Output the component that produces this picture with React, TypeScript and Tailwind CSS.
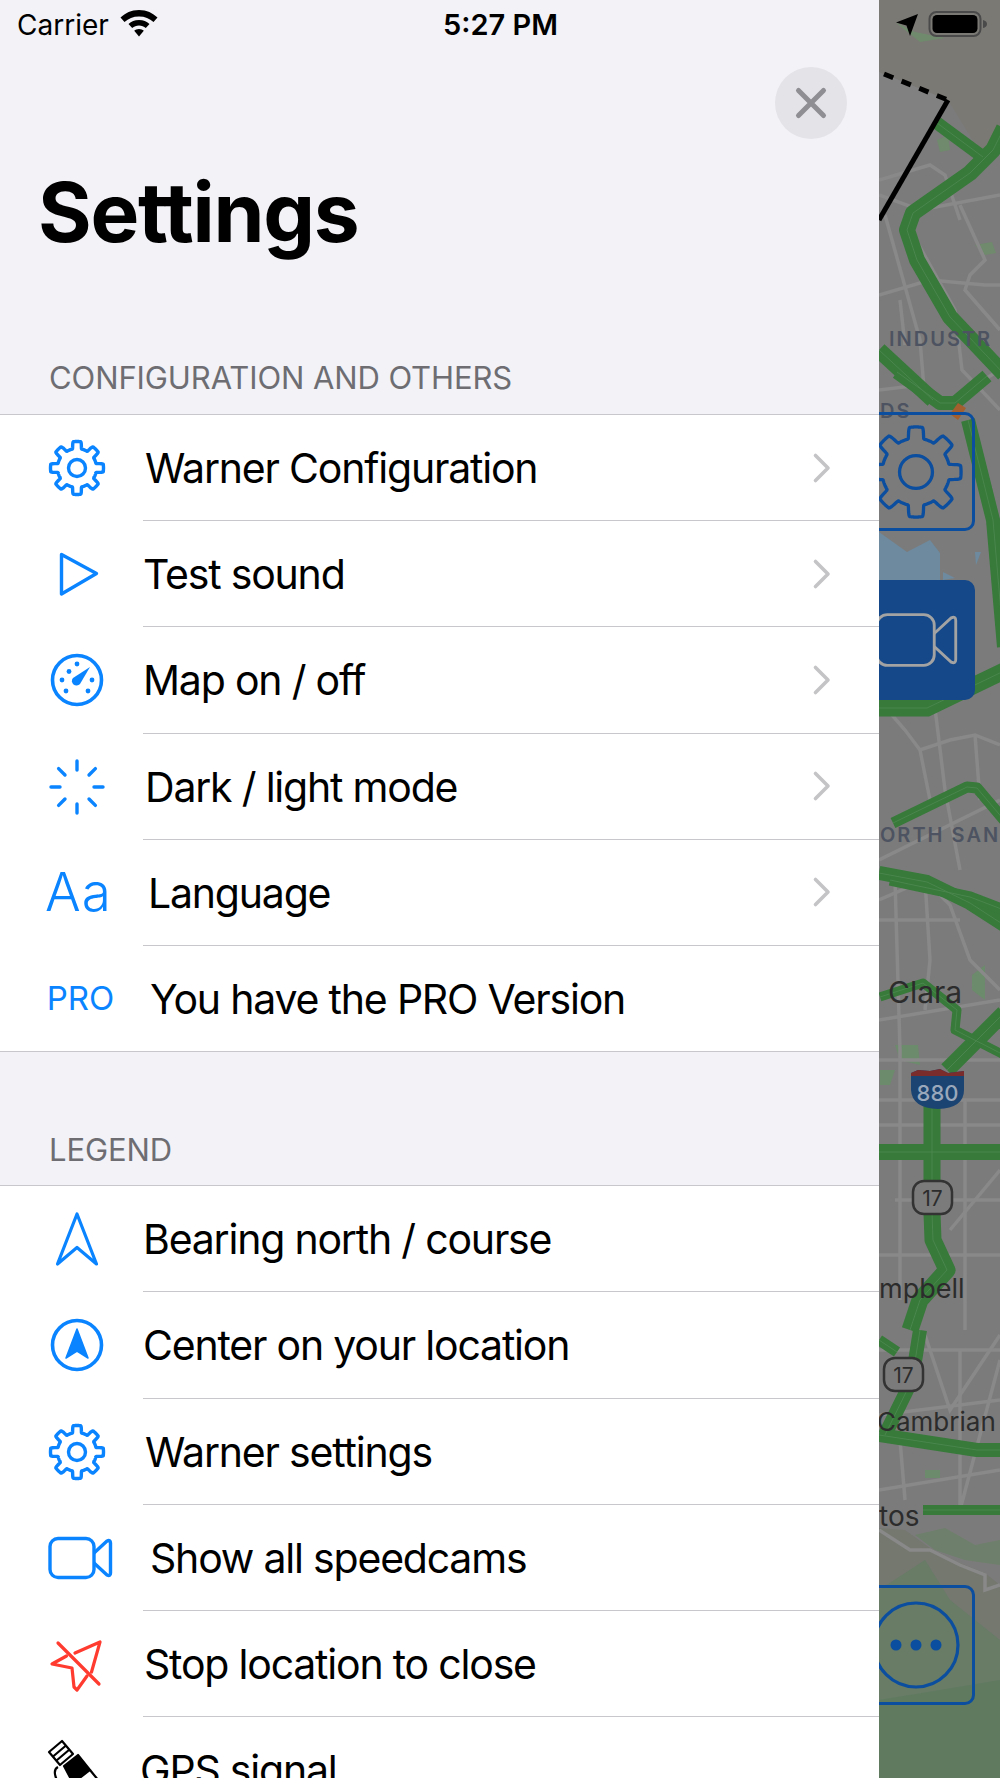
import type { ReactNode } from "react";

// gearshape outline: radius swings between root and outer, 8 soft teeth
function gearPath(cx: number, cy: number, outer: number, root: number) {
  const pts: string[] = [];
  const samples = 360;
  for (let i = 0; i < samples; i++) {
    const t = (i / samples) * Math.PI * 2;
    const c = Math.cos(8 * t);
    const k = Math.min(1, Math.max(0, (c + 0.35) / 0.8));
    const s = k * k * (3 - 2 * k);
    const r = root + (outer - root) * s;
    pts.push(`${(cx + r * Math.sin(t)).toFixed(2)} ${(cy - r * Math.cos(t)).toFixed(2)}`);
  }
  return `M${pts.join("L")}Z`;
}

function GearIcon() {
  return (
    <svg className="shrink-0" width="60" height="60" viewBox="0 0 60 60" fill="none" stroke="#0a84ff" strokeWidth="3.4" strokeLinejoin="round">
      <path d={gearPath(30, 30, 26.5, 19.5)} />
      <circle cx="30" cy="30" r="8.5" />
    </svg>
  );
}

function PlayIcon() {
  return (
    <svg className="shrink-0" width="60" height="60" viewBox="0 0 60 60" fill="none" stroke="#0a84ff" strokeWidth="3.4" strokeLinejoin="round">
      <path d="M14.500 10.500 L49.500 29.500 L14.500 50 Z" />
    </svg>
  );
}

function GaugeIcon() {
  return (
    <svg className="shrink-0" width="60" height="60" viewBox="0 0 60 60" fill="none">
      <circle cx="30" cy="30" r="24.500" stroke="#0a84ff" strokeWidth="3.6" />
      {[[22, 21.5], [30, 14], [15, 30], [45, 30], [19, 41], [41, 41]].map(([x, y]) => (
        <circle key={`${x}-${y}`} cx={x} cy={y} r="2.400" fill="#0a84ff" />
      ))}
      <path d="M43 17 L33 34 A4.400 4.400 0 1 1 26 28 Z" fill="#0a84ff" />
    </svg>
  );
}

function SpinnerIcon() {
  const spokes = [0, 45, 90, 135, 180, 225, 270, 315];
  return (
    <svg className="shrink-0" width="60" height="60" viewBox="0 0 60 60" fill="none" stroke="#0a84ff" strokeWidth="3.4" strokeLinecap="round">
      {spokes.map((deg) => (
        <line key={deg} x1="30" y1="4" x2="30" y2="13" transform={`rotate(${deg} 30 30)`} />
      ))}
    </svg>
  );
}

function BearingIcon() {
  return (
    <svg className="shrink-0" width="60" height="60" viewBox="0 0 60 60" fill="none" stroke="#0a84ff" strokeWidth="3.2" strokeLinejoin="round">
      <path d="M30 5 L49.500 55 L30 38.500 L10.500 55 Z" />
    </svg>
  );
}

function CenterIcon() {
  return (
    <svg className="shrink-0" width="60" height="60" viewBox="0 0 60 60" fill="none">
      <circle cx="30" cy="30" r="24.500" stroke="#0a84ff" strokeWidth="3.6" />
      <path d="M30 14 L41 43 L30 36 L19 43 Z" fill="#0a84ff" stroke="#0a84ff" strokeWidth="1.5" strokeLinejoin="round" />
    </svg>
  );
}

function CameraIcon({
  color = "#0a84ff",
  width = 66,
  height = 44,
  stroke = 3.4,
  className = "",
}: {
  color?: string;
  width?: number;
  height?: number;
  stroke?: number;
  className?: string;
}) {
  return (
    <svg className={`shrink-0 ${className}`} width={width} height={height} viewBox="0 0 66 44" fill="none" stroke={color} strokeWidth={stroke} strokeLinejoin="round">
      <rect x="3" y="2.500" width="44" height="39" rx="8" />
      <path d="M47 17 L60 5 Q63.500 3.500 63.500 7 V37 Q63.500 40.500 60 39 L47 27" />
    </svg>
  );
}

function StopLocationIcon() {
  return (
    <svg className="shrink-0" width="60" height="60" viewBox="0 0 60 60" fill="none" stroke="#ff3b30" strokeWidth="3.2" strokeLinejoin="round" strokeLinecap="round">
      <path d="M28 19 L53 8 L44.500 38" />
      <path d="M19.500 22 L5 30 L25 34 L27 53 L30 56 L40 42" />
      <line x1="11" y1="9" x2="52" y2="50" />
    </svg>
  );
}

// the bottom of this one falls below the fold in the screenshot
function SatelliteIcon() {
  return (
    <svg className="shrink-0 overflow-visible" width="60" height="60" viewBox="0 0 60 60" fill="none" stroke="#000" strokeWidth="2.2" strokeLinejoin="round">
      <path d="M15 1 L2 12 L13 25 L26 14 Z" />
      <path d="M19 5.500 L6 16.500 M22.500 9.500 L9.500 20.500" />
      <path d="M31 15 L43 30 L26 43 L17 26 Z" fill="#000" />
      <path d="M11 27 C5 30 8 42 18 48 L26 43" />
      <path d="M43 30 L56 46 L40 58 L28 44" />
    </svg>
  );
}

function Chevron() {
  return (
    <svg className="shrink-0" width="20" height="32" viewBox="0 0 20 32" fill="none" stroke="#c4c4c7" strokeWidth="3.6" strokeLinecap="round" strokeLinejoin="round">
      <path d="M3.500 3.500 L16 16 L3.500 28.500" />
    </svg>
  );
}

interface RowProps {
  icon: ReactNode;
  label: string;
  indent: string;
  chevron?: boolean;
  last?: boolean;
}

function Row({ icon, label, indent, chevron, last }: RowProps) {
  return (
    <div className="flex h-[106.2px] bg-white">
      <div className={`relative w-[143px] shrink-0 ${last ? "border-b border-[#c8c8cc]" : ""}`}>
        <div className="absolute left-[47px] top-[23px] flex h-[60px] w-[60px] items-center justify-center">{icon}</div>
      </div>
      <div className={`flex min-w-0 flex-1 items-center justify-between border-b border-[#c8c8cc] pr-[47px] ${indent}`}>
        <span className="pt-[2px] text-[41px] leading-none tracking-[-1.2px] text-black">{label}</span>
        {chevron && <Chevron />}
      </div>
    </div>
  );
}

const GREEN_ROADS: [string, number][] = [
  ["M937 123 L983 157", 13],
  ["M1004 128 L993 150 L970 173 L913 213 L907 230 L917 260 L950 317 L1004 374", 16],
  ["M879 350 L933 400", 16],
  ["M897 372 L940 403 L955 403 L987 376", 14],
  ["M968 420 L993 520 L1004 647", 14],
  ["M879 708 L927 708 L1004 671", 17],
  ["M893 823 L967 787 L977 788 L1004 820", 11],
  ["M879 873 L927 882 L970 903 L1004 925", 14],
  ["M890 880 L970 897 L1004 910", 11],
  ["M1004 1013 L947 1070", 16],
  ["M932 1085 L932 1213 L933 1240 L947 1270 L920 1300 L910 1330", 17],
  ["M879 1152 L1004 1152", 16],
  ["M880 997 L923 983 L957 1010 L955 1030 L1004 1055", 9],
  ["M920 1330 L912 1380 L885 1435", 14],
  ["M879 1340 L897 1352", 11],
  ["M879 1435 L977 1450 L1004 1450", 14],
  ["M923 1510 L1004 1510", 10],
];

const STREETS = [
  "M879 180 L930 165 L945 175 L960 220",
  "M879 195 L920 210 L1000 195",
  "M905 220 L955 310 L962 370 L1000 410",
  "M879 295 L930 280 L985 285 L1000 285",
  "M960 205 L985 260 L970 275 L965 290 L1000 330",
  "M885 215 L920 340 L925 400",
  "M900 300 L905 345",
  "M879 390 L920 385 L935 400",
  "M950 400 L1000 370",
  "M879 700 L905 730 L920 750 L950 740 L975 735 L1000 745",
  "M920 750 L930 800 M975 735 L980 800",
  "M935 708 L945 790 L960 870",
  "M879 860 L1000 800",
  "M879 900 L925 880 L950 905 L970 960 L1000 990",
  "M895 880 L900 1050 L900 1300",
  "M925 880 L930 960 L925 1010",
  "M879 920 L960 920 M879 1020 L1000 1000",
  "M879 1060 L1000 1060 M879 1100 L1000 1100 M879 1125 L1000 1125",
  "M965 1100 L965 1330",
  "M895 1200 L1000 1200 M879 1255 L1000 1255",
  "M1000 1170 L950 1230",
  "M879 1350 L1000 1350 M879 1415 L1000 1400",
  "M925 1335 L950 1410 L1000 1335",
  "M960 1350 L960 1510 M1000 1360 L960 1510",
  "M900 1440 L905 1500",
  "M879 1490 L1000 1470",
  "M879 1530 L910 1550 L930 1550 L960 1565 L985 1575 L985 1590 L1000 1585",
];

function MapBackdrop() {
  return (
    <svg className="h-[1778px] w-[121px]" viewBox="879 0 121 1778" fill="none">
      <rect x="879" y="0" width="121" height="1778" fill="#7b7b7b" />
      {/* hills at the top and the bottom */}
      <path d="M879 0 H1000 V135 L983 157 L948 100 L884 74 L879 72 Z" fill="#7b7974" />
      <path d="M948 100 L884 74 L879 72 V220 Z" fill="#818181" />
      <path d="M895 22 L915 32 L945 38 L920 42 Z M937 140 L948 135 L950 150 L940 152 Z M975 245 L992 242 L996 253 L985 255 Z" fill="#6f8a6c" />
      <path d="M879 1528 L905 1530 L930 1548 L960 1563 L985 1573 L1000 1585 V1778 H879 Z" fill="#74786f" />
      <path d="M915 1535 L945 1528 L975 1545 L1000 1540 V1565 L965 1560 L935 1550 Z" fill="#6e806b" />
      <path d="M879 1590 L925 1560 L950 1600 L1000 1640 V1778 H879 Z" fill="#687c66" />
      <path d="M879 1700 L940 1690 L1000 1680 V1778 H879 Z" fill="#607a60" />
      <path d="M925 1470 H940 V1478 H925 Z M972 975 L985 965 L985 1000 L972 990 Z M895 1045 L918 1045 L920 1065 L900 1060 Z M880 1070 L895 1070 L890 1085 L880 1085 Z" fill="#6c8a6c" />

      <g stroke="#898989" strokeWidth="3.500">
        {STREETS.map((d) => (
          <path key={d} d={d} />
        ))}
      </g>

      {/* water patch behind the camera button */}
      <path d="M879 532 L907 552 L930 540 L940 553 L940 700 L879 700 Z" fill="#6d8a9f" />
      <path d="M975 552 L981 552 L976 565 Z M943 572 L955 578 L943 580 Z" fill="#6d8a9f" />

      <g stroke="#377a3a" strokeLinejoin="round">
        {GREEN_ROADS.map(([d, w]) => (
          <path key={d} d={d} strokeWidth={w} />
        ))}
      </g>
      <g stroke="#4a864d" strokeWidth="1" strokeLinejoin="round">
        {GREEN_ROADS.map(([d]) => (
          <path key={d} d={d} />
        ))}
      </g>
      <path d="M950 414 L958 403 L966 408 L958 420 Z" fill="#a45f2e" />

      {/* the drawn speed zone */}
      <path d="M884 74 L948 100" stroke="#000" strokeWidth="5" strokeDasharray="10 9" />
      <path d="M948 100 L879 220" stroke="#000" strokeWidth="5" />

      {/* shields */}
      <path d="M911 1073 L918 1070 L930 1071 L940 1069 L948 1073 L964 1071 L964 1090 Q964 1108 938 1109 Q912 1108 911 1090 Z" fill="#1b4472" />
      <path d="M911 1073 L918 1070 L930 1071 L940 1069 L948 1073 L964 1071 L964 1076 H911 Z" fill="#7a2c2c" />
      <text x="937.500" y="1101" textAnchor="middle" fill="#9aa8bc" fontFamily="Inter, sans-serif" fontSize="22" fontWeight="500">880</text>
      {[[932, 1197], [903, 1374]].map(([x, y]) => (
        <g key={y}>
          <rect x={x - 19} y={y - 16} width="39" height="33" rx="11" fill="#7b7b7b" stroke="#333" strokeWidth="2.5" />
          <text x={x + 0.5} y={y + 9} textAnchor="middle" fill="#2c2c2c" fontFamily="Inter, sans-serif" fontSize="21">17</text>
        </g>
      ))}

      {/* labels */}
      <g fontFamily="Inter, sans-serif">
        <g fill="#4d5361" fontSize="20" fontWeight="600" letterSpacing="2">
          <text x="889" y="346">INDUSTR</text>
          <text x="880" y="418">DS</text>
          <text x="880" y="842">ORTH SAN</text>
        </g>
        <g fill="#2c2c2c">
          <text x="888" y="1003" fontSize="30">Clara</text>
          <text x="879" y="1298" fontSize="27">mpbell</text>
          <text x="877" y="1431" fontSize="26">Cambrian</text>
          <text x="879" y="1526" fontSize="28">tos</text>
        </g>
      </g>
    </svg>
  );
}

function MapOverlayButton({ className, children }: { className: string; children: ReactNode }) {
  return <div className={`absolute left-[-22px] flex w-[118px] items-center justify-center rounded-[10px] ${className}`}>{children}</div>;
}

function MapPane() {
  return (
    <div className="relative h-[1778px] w-[121px] shrink-0 overflow-hidden">
      <MapBackdrop />
      <MapOverlayButton className="top-[412px] h-[119px] border-[3px] border-[#0b4d9e]">
        <svg className="shrink-0" width="104" height="104" viewBox="0 0 60 60" fill="none" stroke="#0b4d9e" strokeWidth="1.9" strokeLinejoin="round">
          <path d={gearPath(30, 30, 26, 19.5)} />
          <circle cx="30" cy="30" r="9.500" />
        </svg>
      </MapOverlayButton>
      <MapOverlayButton className="top-[580px] h-[120px] bg-[#144888]">
        <CameraIcon color="#a3a3a3" width={86} height={58} stroke={2.2} />
      </MapOverlayButton>
      <MapOverlayButton className="top-[1585px] h-[120px] border-[3px] border-[#0b4d9e]">
        <svg className="shrink-0" width="92" height="92" viewBox="0 0 92 92" fill="none">
          <circle cx="46" cy="46" r="42" stroke="#0b4d9e" strokeWidth="3.2" />
          <circle cx="26" cy="46" r="5.500" fill="#0b4d9e" />
          <circle cx="46" cy="46" r="5.500" fill="#0b4d9e" />
          <circle cx="66" cy="46" r="5.500" fill="#0b4d9e" />
        </svg>
      </MapOverlayButton>
    </div>
  );
}

function StatusBar() {
  return (
    <div className="absolute inset-x-0 top-0 flex h-[50px] items-center text-black">
      <span className="ml-[17px] text-[28px] leading-none">Carrier</span>
      <svg className="absolute left-[120px] top-[10px]" width="38" height="28" viewBox="0 0 38 28" fill="#000">
        <path d="M19 0 C27 0 32.500 3 37.500 7.500 L33.500 12 C29.500 8.500 25 6.500 19 6.500 C13 6.500 8.500 8.500 4.500 12 L0.500 7.500 C5.500 3 11 0 19 0 Z" />
        <path d="M19 10 C23.500 10 26.500 11.500 29.500 14 L25.800 18 C23.800 16.500 21.800 15.500 19 15.500 C16.200 15.500 14.200 16.500 12.200 18 L8.500 14 C11.500 11.500 14.500 10 19 10 Z" />
        <path d="M19 19 C21 19 22.500 19.800 23.800 20.800 L19 26.500 L14.200 20.800 C15.500 19.800 17 19 19 19 Z" />
      </svg>
      <span className="absolute left-[443px] top-[11px] text-[29px] leading-[28px] font-semibold">5:27 PM</span>
      <svg className="absolute left-[895px] top-[13px]" width="24" height="24" viewBox="0 0 24 24" fill="#000">
        <path d="M23 1 L15 23 L11.500 12.500 L1 9.500 Z" />
      </svg>
      <svg className="absolute left-[928px] top-[10px]" width="60" height="28" viewBox="0 0 60 28" fill="none">
        <rect x="1.500" y="2" width="51" height="24" rx="7" stroke="#4a4a4a" strokeWidth="2" />
        <rect x="4.500" y="5" width="45" height="18" rx="4.500" fill="#000" />
        <path d="M55 10 Q59 11 59 14 Q59 17 55 18 Z" fill="#4a4a4a" />
      </svg>
    </div>
  );
}

export default function App() {
  return (
    <div className="relative flex h-[1778px] w-[1000px] overflow-hidden bg-[#f2f2f7] font-['Inter',sans-serif]">
      <div className="w-[879px] shrink-0 overflow-hidden">
        <div className="flex justify-end pt-[67px] pr-[32px]">
          <div className="flex h-[72px] w-[72px] items-center justify-center rounded-full bg-[#e3e3e8]">
            <svg width="36" height="36" viewBox="0 0 36 36" fill="none" stroke="#8e8e93" strokeWidth="5" strokeLinecap="round">
              <path d="M5.500 5.500 L30.500 30.500 M30.500 5.500 L5.500 30.500" />
            </svg>
          </div>
        </div>
        <h1 className="mt-[33px] ml-[38px] text-[82px] leading-[82px] font-bold tracking-[-1.3px] text-black">Settings</h1>

        <div className="mt-[106px] ml-[49px] h-[54px] text-[31px] leading-[36px] tracking-[-0.1px] text-[#6d6d72]">CONFIGURATION AND OTHERS</div>
        <div className="border-t border-[#c8c8cc]">
          <Row icon={<GearIcon />} label="Warner Configuration" indent="pl-[2px]" chevron />
          <Row icon={<PlayIcon />} label="Test sound" indent="pl-0" chevron />
          <Row icon={<GaugeIcon />} label="Map on / off" indent="pl-0" chevron />
          <Row icon={<SpinnerIcon />} label="Dark / light mode" indent="pl-[2px]" chevron />
          <Row
            icon={<span className="ml-[3px] text-[53px] leading-none font-light tracking-[1px] text-[#0a84ff]">Aa</span>}
            label="Language"
            indent="pl-[5px]"
            chevron
          />
          <Row
            icon={<span className="ml-[7px] text-[33px] leading-none text-[#0a84ff]">PRO</span>}
            label="You have the PRO Version"
            indent="pl-[7px]"
            last
          />
        </div>

        <div className="mt-[80px] ml-[49px] h-[53px] text-[31px] leading-[36px] tracking-[-0.1px] text-[#6d6d72]">LEGEND</div>
        <div className="border-t border-[#c8c8cc]">
          <Row icon={<BearingIcon />} label="Bearing north / course" indent="pl-0" />
          <Row icon={<CenterIcon />} label="Center on your location" indent="pl-0" />
          <Row icon={<GearIcon />} label="Warner settings" indent="pl-[2px]" />
          <Row icon={<CameraIcon className="ml-[5px]" />} label="Show all speedcams" indent="pl-[7px]" />
          <Row icon={<StopLocationIcon />} label="Stop location to close" indent="pl-[1px]" />
          <Row icon={<SatelliteIcon />} label="GPS signal" indent="-ml-[3px]" />
        </div>
      </div>
      <MapPane />
      <StatusBar />
    </div>
  );
}
